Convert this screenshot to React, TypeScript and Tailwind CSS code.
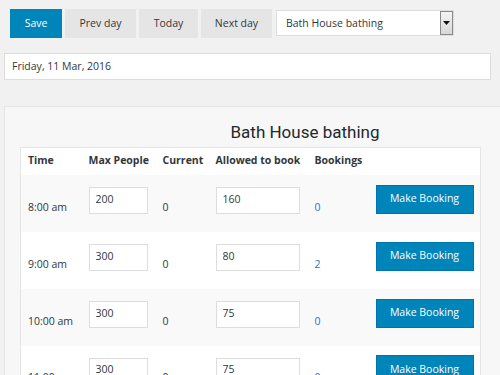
import React from 'react';

interface Slot {
  time: string;
  max: string;
  current: number;
  allowed: string;
  bookings: number;
}

const slots: Slot[] = [
  { time: '8:00 am', max: '200', current: 0, allowed: '160', bookings: 0 },
  { time: '9:00 am', max: '300', current: 0, allowed: '80', bookings: 2 },
  { time: '10:00 am', max: '300', current: 0, allowed: '75', bookings: 0 },
  { time: '11:00 am', max: '300', current: 0, allowed: '75', bookings: 0 },
];

const TopButton = ({ label, primary, width }: { label: string; primary?: boolean; width: string }) => (
  <button
    className={
      primary
        ? `h-[29px] ${width} bg-[#0085ba] text-white text-[10.5px]`
        : `h-[29px] ${width} bg-[#e5e5e5] text-[#32373c] text-[10.5px]`
    }
  >
    {label}
  </button>
);

const App: React.FC = () => {
  return (
    <div className="w-[500px] h-[375px] overflow-hidden bg-[#f1f1f1] text-[#32373c] font-['Open_Sans',sans-serif] text-[10.5px]">
      <div className="flex items-start pl-[10px] pt-[9px] gap-[3px]">
        <TopButton label="Save" primary width="w-[52px]" />
        <TopButton label="Prev day" width="w-[71px]" />
        <TopButton label="Today" width="w-[59px]" />
        <TopButton label="Next day" width="w-[71px]" />
        <div className="ml-[1px] mt-[1px] flex h-[26px] w-[178px] border border-[#dddddd] bg-white">
          <div className="flex-1 pl-[9px] leading-[24px]">Bath House bathing</div>
          <div className="flex w-[13px] items-center justify-center border border-[#8a8a8a] bg-gradient-to-b from-[#f4f4f4] to-[#d8d8d8]">
            <svg width="7" height="5" viewBox="0 0 7 5">
              <path d="M0 0h7L3.5 4z" fill="#111" />
            </svg>
          </div>
        </div>
      </div>

      <div className="ml-[4px] mt-[15px] h-[27px] w-[487px] border border-[#dddddd] bg-white pl-[7px] leading-[25px]">
        Friday, 11 Mar, 2016
      </div>

      <div className="ml-[4px] mt-[26px] w-[600px] border border-[#e5e5e5] bg-[#f7f7f7] pl-[15px] shadow-[0_1px_1px_rgba(0,0,0,0.04)]">
        <div className="w-[570px] pt-[13px] pb-[3px] text-center font-['Roboto',sans-serif] text-[17px] leading-[24px] text-[#23282d]">
          Bath House bathing
        </div>
        <table className="w-[461px] table-fixed border border-[#e5e5e5] bg-white border-collapse whitespace-nowrap">
          <thead>
            <tr className="h-[27px] text-left">
              <th className="w-[68px] pl-[7px] font-bold">Time</th>
              <th className="w-[74px] font-bold">Max People</th>
              <th className="w-[53px] font-bold">Current</th>
              <th className="w-[99px] font-bold">Allowed to book</th>
              <th className="w-[61px] font-bold">Bookings</th>
              <th></th>
            </tr>
          </thead>
          <tbody>
            {slots.map((s, i) => (
              <tr key={s.time} className={i % 2 === 0 ? 'h-[57px] bg-[#f9f9f9]' : 'h-[57px] bg-white'}>
                <td className="pl-[7px] pt-[9px]">{s.time}</td>
                <td className="pb-[5px]">
                  <input
                    readOnly
                    value={s.max}
                    className="h-[27px] w-[59px] border border-[#dddddd] bg-white px-[6px] pb-[4px] text-[10.5px] text-[#32373c] outline-none"
                  />
                </td>
                <td className="pt-[9px]">{s.current}</td>
                <td className="pb-[5px]">
                  <input
                    readOnly
                    value={s.allowed}
                    className="h-[27px] w-[84px] border border-[#dddddd] bg-white px-[6px] pb-[4px] text-[10.5px] text-[#32373c] outline-none"
                  />
                </td>
                <td className="pt-[9px] text-[#2e6fc7]">{s.bookings}</td>
                <td className="pb-[8px]">
                  <button className="h-[29px] w-[98px] border border-[#0073aa] bg-[#0085ba] text-[10.5px] text-white">
                    Make Booking
                  </button>
                </td>
              </tr>
            ))}
          </tbody>
        </table>
      </div>
    </div>
  );
};

export default App;
